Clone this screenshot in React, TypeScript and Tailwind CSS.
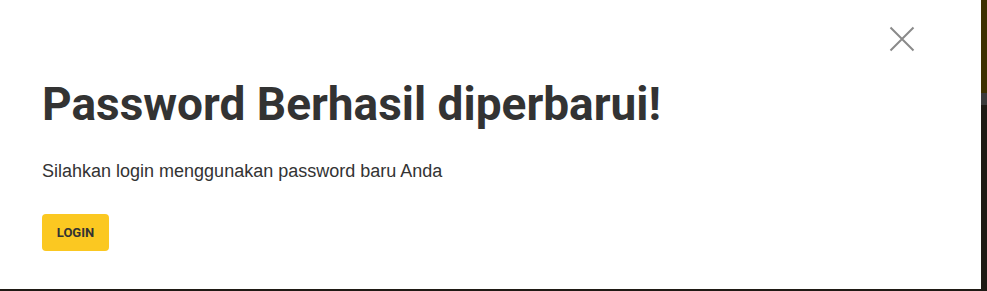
export default function App() {
  return (
    <div className="w-[987px] h-[291px] bg-[#1f1a14] flex overflow-hidden">
      <div className="w-[981px] h-[289px] bg-white relative shrink-0">
        <button className="absolute left-[889px] top-[26px] w-[26px] h-[26px] flex items-center justify-center" aria-label="close">
          <svg width="26" height="26" viewBox="0 0 26 26">
            <path d="M1.5 1.5 L24.5 24.5 M24.5 1.5 L1.5 24.5" stroke="#8a8a8a" strokeWidth="2" fill="none" />
          </svg>
        </button>
        <div className="pl-[42px] pt-[76px]">
          <h1 className="text-[46px] leading-[56px] font-bold text-[#333333]" style={{ fontFamily: 'Roboto, sans-serif' }}>
            Password Berhasil diperbarui!
          </h1>
          <p className="mt-[28px] text-[18px] leading-[22px] text-[#333333]" style={{ fontFamily: '"Liberation Sans", Arial, sans-serif' }}>
            Silahkan login menggunakan password baru Anda
          </p>
          <button className="mt-[32px] w-[67px] h-[37px] rounded-[4px] bg-[#fbc821] text-[13px] font-bold text-[#333333] flex items-center justify-center" style={{ fontFamily: 'Roboto, sans-serif' }}>
            LOGIN
          </button>
        </div>
      </div>
      <div className="flex flex-col w-[6px]">
        <div className="h-[93px] bg-[#3d3100]"></div>
        <div className="h-[12px] bg-[#3a3a3a]"></div>
        <div className="flex-1 bg-[#1e1a14]"></div>
      </div>
    </div>
  );
}
